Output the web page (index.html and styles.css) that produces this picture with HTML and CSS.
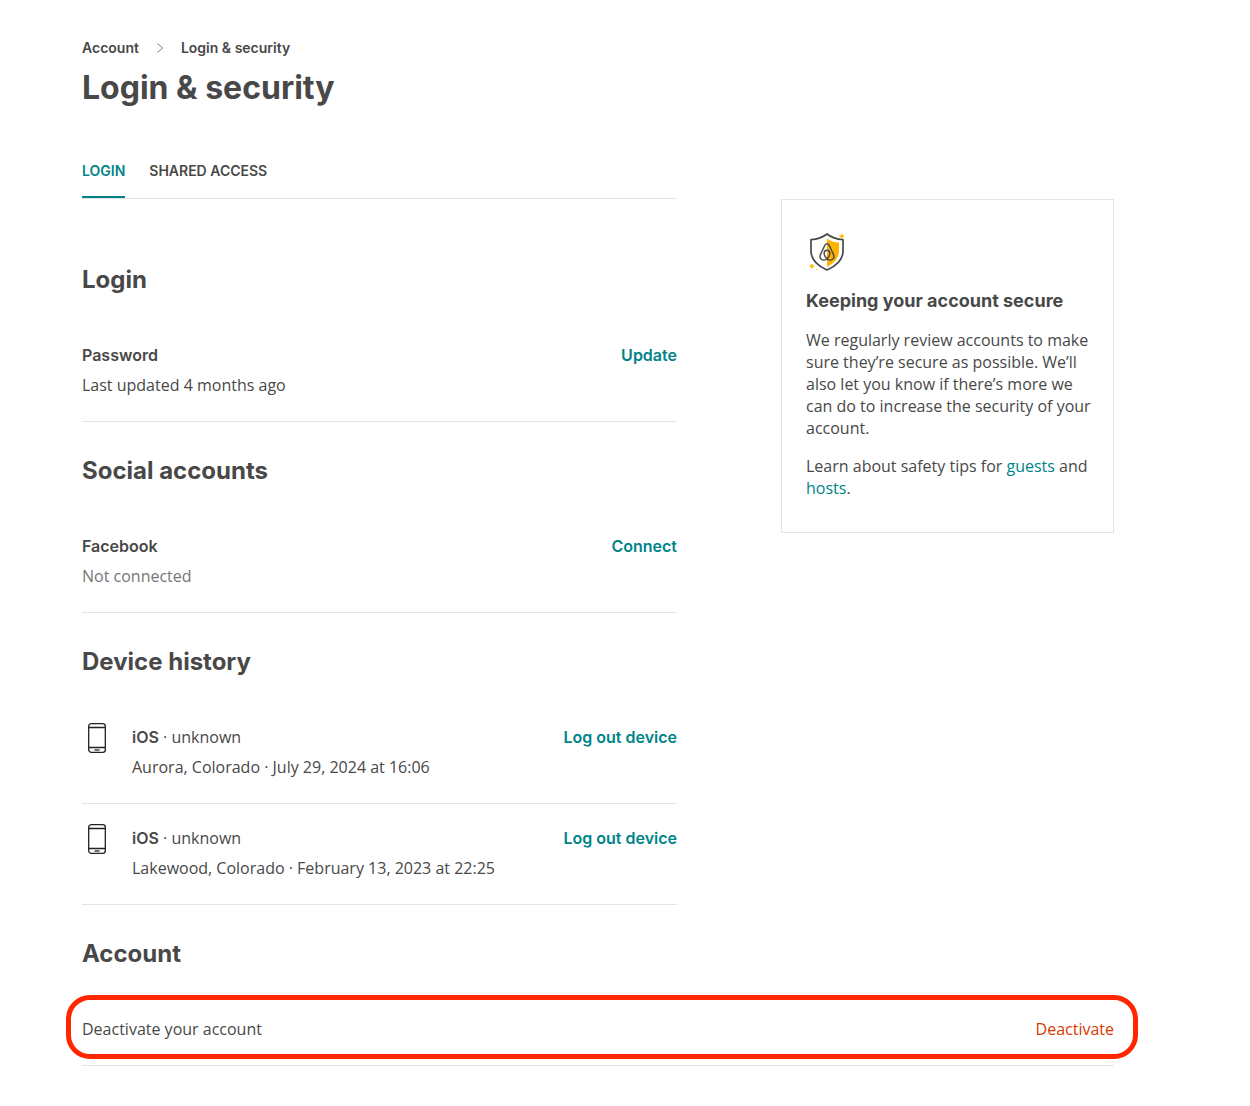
FILE: index.html
```html
<!DOCTYPE html>
<html lang="en">
<head>
    <meta charset="utf-8">
    <meta name="viewport" content="width=device-width, initial-scale=1">
    <title>Login &amp; security</title>
    <link rel="stylesheet" href="styles.css">
</head>
<body>
    <svg class="sprite" aria-hidden="true">
        <symbol id="phone" viewBox="0 0 30 32">
            <g fill="none" stroke="#222" stroke-width="1.3">
                <rect x="6.7" y="1.7" width="16.6" height="28.6" rx="2.6"/>
                <path d="M6.7 5.5h16.6M6.7 25.5h16.6"/>
                <path d="M12.5 28h5"/>
            </g>
        </symbol>
    </svg>

    <div class="page">
        <header>
            <nav class="breadcrumb" aria-label="Breadcrumb">
                <a href="#">Account</a>
                <svg class="chevron" viewBox="0 0 10 10" aria-hidden="true"><path d="M2.5 0.5L7.5 5l-5 4.5"/></svg>
                <a href="#">Login &amp; security</a>
            </nav>
            <h1>Login &amp; security</h1>
        </header>

        <div class="columns">
            <main>
                <div class="tabs" role="tablist">
                    <button type="button" class="tab active" role="tab" aria-selected="true">LOGIN</button>
                    <button type="button" class="tab" role="tab" aria-selected="false">SHARED ACCESS</button>
                </div>

                <section>
                    <h2>Login</h2>
                    <div class="row">
                        <div class="info">
                            <h3>Password</h3>
                            <p>Last updated 4 months ago</p>
                        </div>
                        <button type="button" class="action">Update</button>
                    </div>
                </section>

                <section>
                    <h2>Social accounts</h2>
                    <div class="row">
                        <div class="info">
                            <h3>Facebook</h3>
                            <p class="muted">Not connected</p>
                        </div>
                        <button type="button" class="action">Connect</button>
                    </div>
                </section>

                <section>
                    <h2>Device history</h2>
                    <div class="row">
                        <svg class="phone" aria-hidden="true"><use href="#phone"/></svg>
                        <div class="info">
                            <p><b>iOS</b> · unknown</p>
                            <p>Aurora, Colorado · July 29, 2024 at 16:06</p>
                        </div>
                        <button type="button" class="action">Log out device</button>
                    </div>
                    <div class="row">
                        <svg class="phone" aria-hidden="true"><use href="#phone"/></svg>
                        <div class="info">
                            <p><b>iOS</b> · unknown</p>
                            <p>Lakewood, Colorado · February 13, 2023 at 22:25</p>
                        </div>
                        <button type="button" class="action">Log out device</button>
                    </div>
                </section>
            </main>

            <aside class="card">
                <svg class="shield" viewBox="0 0 40 40" aria-hidden="true">
                    <path d="M21 6.500c3.300 2.800 7 3.700 12 4v8.500c0 7-5 12.500-12 16z" fill="#ffb400"/>
                    <path d="M21 2c4.500 3.600 9.500 5.200 16 5.700v11.300c0 8.500-6.500 14.800-16 19c-9.500-4.200-16-10.500-16-19V7.700c6.500-.5 11.500-2.100 16-5.700z" fill="none" stroke="#484848" stroke-width="1.700" stroke-linejoin="round"/>
                    <path d="M21 27c-1.900-2.200-2.900-4.100-2.900-5.600c0-2 1.200-3.200 2.900-3.200s2.900 1.200 2.900 3.200c0 1.500-1 3.400-2.900 5.600c-2.800 2.200-7 1-7-2.400c0-.9.400-1.800.8-2.700l4-8.600c.6-1.100 1.200-1.600 2.200-1.600s1.600.5 2.200 1.600l4 8.600c.4.900.8 1.800.8 2.700c0 3.400-4.200 4.600-7 2.400z" fill="none" stroke="#484848" stroke-width="1.400" stroke-linejoin="round"/>
                    <g stroke="#ffb400" stroke-width="1.500" stroke-linecap="round">
                        <path d="M35.800 2.500v3.500M34 4.200h3.500M5.800 32.500v3.500M4 34.200h3.500"/>
                        <path d="M11 37.500h.1" stroke-width="1.200"/>
                    </g>
                </svg>
                <h3>Keeping your account secure</h3>
                <p>We regularly review accounts to make sure they’re secure as possible. We’ll also let you know if there’s more we can do to increase the security of your account.</p>
                <p>Learn about safety tips for <a href="#">guests</a> and <a href="#">hosts</a>.</p>
            </aside>
        </div>

        <section>
            <h2>Account</h2>
            <div class="row highlight">
                <p class="info">Deactivate your account</p>
                <button type="button" class="action danger">Deactivate</button>
            </div>
        </section>
    </div>
</body>
</html>
```
FILE: styles.css
```css
* {
    box-sizing: border-box;
}

body {
    margin: 0;
    background: #fff;
    color: #484848;
    font-family: Inter, "Open Sans", sans-serif;
    font-size: 16px;
    line-height: 22px;
}

h1, h2, h3, p {
    margin: 0;
}

p {
    font-family: "Open Sans", sans-serif;
}

a {
    color: #008489;
    text-decoration: none;
}

button {
    padding: 0;
    border: 0;
    background: none;
    color: inherit;
    font: inherit;
    cursor: pointer;
}

.sprite {
    display: none;
}

.page {
    padding: 39px 136px 40px 82px;
}

/* header */
.breadcrumb {
    display: flex;
    align-items: center;
    gap: 16px;
    font-size: 14px;
    font-weight: 600;
    line-height: 18px;
}

.breadcrumb a {
    color: inherit;
}

.chevron {
    width: 10px;
    height: 10px;
    fill: none;
    stroke: #767676;
}

h1 {
    margin-top: 13px;
    font-size: 32px;
    font-weight: 700;
    line-height: 36px;
}

h2 {
    margin: 33px 0 25px;
    font-size: 24px;
    font-weight: 700;
    line-height: 32px;
}

h3 {
    font-size: 16px;
    font-weight: 600;
    line-height: 22px;
}

.columns {
    display: grid;
    grid-template-columns: 595fr 333fr;
    column-gap: 104px;
    align-items: start;
    margin-top: 56px;
}

/* tabs */
.tabs {
    display: flex;
    gap: 24px;
    margin-bottom: 65px;
    border-bottom: 1px solid #e4e4e4;
}

.tabs + section h2 {
    margin-top: 0;
}

.tab {
    padding-bottom: 16px;
    border-bottom: 2px solid transparent;
    font-size: 14px;
    font-weight: 600;
    line-height: 18px;
}

.tab.active {
    border-color: #008489;
    color: #008489;
}

/* settings rows */
.row {
    display: flex;
    align-items: flex-start;
    padding: 23px 0 25px;
    border-bottom: 1px solid #e4e4e4;
}

.info {
    flex: 1;
}

.info > * + * {
    margin-top: 8px;
}

.info b {
    font-family: Inter, sans-serif;
    font-weight: 600;
}

.muted {
    color: #767676;
}

.action {
    color: #008489;
    font-weight: 600;
}

.phone {
    width: 30px;
    height: 32px;
    margin-right: 20px;
    margin-top: -4px;
}

.danger {
    color: #d93900;
    font-family: "Open Sans", sans-serif;
    font-weight: 400;
}

.highlight {
    position: relative;
}

.highlight::after {
    content: "";
    position: absolute;
    inset: 0 -24px 6px -16px;
    border: 5px solid #ff2600;
    border-radius: 24px;
    pointer-events: none;
}

/* side card */
.card {
    margin-top: 37px;
    padding: 32px 20px 33px 24px;
    border: 1px solid #e4e4e4;
}

.shield {
    display: block;
    width: 40px;
    height: 40px;
}

.card h3 {
    margin-top: 17px;
    font-size: 18px;
    font-weight: 700;
    line-height: 24px;
}

.card p {
    margin-top: 16px;
}
```
